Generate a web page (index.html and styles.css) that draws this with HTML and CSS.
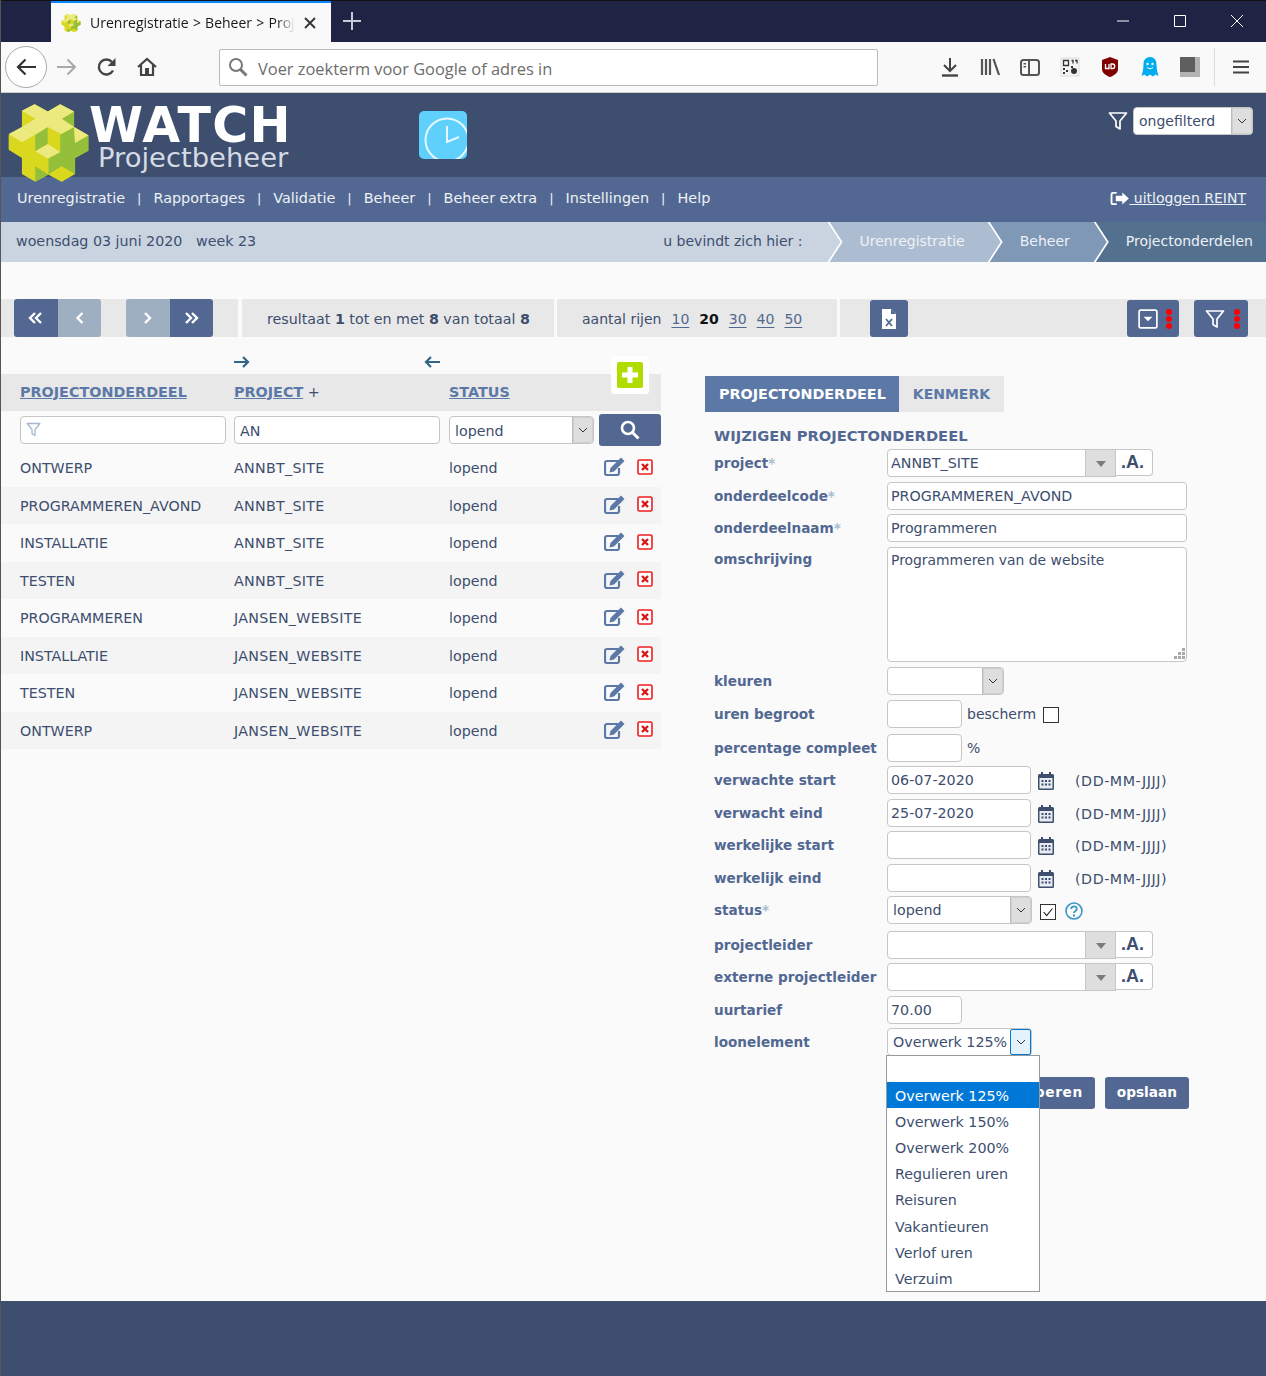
FILE: index.html
```html
<!DOCTYPE html>
<html lang="nl">
<head>
    <meta charset="UTF-8">
    <title>Urenregistratie &gt; Beheer &gt; Projectonderdelen</title>
    <link rel="stylesheet" href="styles.css">
</head>
<body>
<svg class="defs" width="0" height="0">
    <symbol id="logo" viewBox="20 25 250 240">
        <path fill="#d9d81f" d="M65 48 103 28 143 50 180 28 222 50 222 97 265 122 265 168 225 190 225 238 185 262 145 240 105 262 65 238 65 190 25 165 25 120 65 97z"/>
        <path fill="#93bf3a" d="M145 192 180 172 180 120 222 97 225 145 265 122 265 168 225 190 225 238 185 215 145 240z"/>
        <path fill="#93bf3a" d="M185 72 222 50 222 97z"/>
        <path fill="#93bf3a" d="M105 120 143 97 143 148 105 170z"/>
        <path fill="#d9d81f" d="M143 97 180 120 180 172 143 148z"/>
        <path fill="#93bf3a" d="M105 215 145 240 105 262z"/>
        <path fill="#d9d81f" d="M145 240 185 215 185 262z"/>
        <path fill="#ece97f" d="M65 48 103 28 143 50 180 28 222 50 185 72 222 97 183 118 143 97 105 120 65 97 105 72z"/>
        <path fill="#ece97f" d="M25 118 65 97 105 120 65 143z"/>
        <path fill="#ece97f" d="M222 97 265 122 225 145z"/>
        <path fill="#ece97f" d="M105 170 143 148 180 172 143 192z"/>
    </symbol>
    <symbol id="funnel" viewBox="0 0 20 20">
        <path fill="none" stroke="currentColor" stroke-width="1.700" stroke-linejoin="round" d="M1.500 2h17l-6.500 8v8l-4-2.500V10z"/>
    </symbol>
    <symbol id="chev" viewBox="0 0 10 6">
        <path fill="none" stroke="currentColor" stroke-width="1" d="M1 1l4 4 4-4"/>
    </symbol>
    <symbol id="cal" viewBox="0 0 16 18">
        <path fill="#3d4e6e" d="M3 0h2v2h6V0h2v2h1.500A1.500 1.500 0 0 1 16 3.500v13a1.500 1.500 0 0 1-1.500 1.500h-13A1.500 1.500 0 0 1 0 16.500v-13A1.500 1.500 0 0 1 1.500 2H3z"/>
        <path fill="#e8ecf2" d="M1.500 6h13v10.500h-13z"/>
        <path fill="#3d4e6e" d="M3.500 8h2v2h-2zM7 8h2v2H7zM10.500 8h2v2h-2zM3.500 11.500h2v2h-2zM7 11.500h2v2H7zM10.500 11.500h2v2h-2z"/>
    </symbol>
    <symbol id="edit" viewBox="0 0 21 19">
        <path fill="none" stroke="#5b78a6" stroke-width="2.200" d="M14 4H3a2 2 0 0 0-2 2v10a2 2 0 0 0 2 2h10a2 2 0 0 0 2-2v-5"/>
        <path fill="#5b78a6" d="M17 0.500 20.500 4 10 14.500l-4.500 1 1-4.500z"/>
    </symbol>
    <symbol id="del" viewBox="0 0 16 16">
        <rect x="1" y="1" width="14" height="14" rx="1.500" fill="#fff" stroke="#f01c1c" stroke-width="1.600"/>
        <path fill="none" stroke="#d81818" stroke-width="2.400" d="M5 5l6 6M11 5l-6 6"/>
    </symbol>
</svg>

<div class="window">
    <div class="tabbar">
        <div class="tab">
            <svg class="tab-icon"><use href="#logo"/></svg>
            <span class="tab-title">Urenregistratie &gt; Beheer &gt; Proj</span>
            <svg class="tab-close" viewBox="0 0 12 12"><path fill="none" stroke="currentColor" stroke-width="1.800" d="M1 1l10 10M11 1 1 11"/></svg>
        </div>
        <svg class="tab-new" viewBox="0 0 18 18"><path fill="none" stroke="currentColor" stroke-width="2" d="M9 0v18M0 9h18"/></svg>
        <div class="win-buttons">
            <svg viewBox="0 0 12 12"><path stroke="#fff" d="M0 6h12"/></svg>
            <svg viewBox="0 0 12 12"><path fill="none" stroke="#fff" d="M.5.5h11v11H.5z"/></svg>
            <svg viewBox="0 0 12 12"><path stroke="#fff" d="M0 0l12 12M12 0 0 12"/></svg>
        </div>
    </div>

    <div class="toolbar">
        <div class="back-btn">
            <svg viewBox="0 0 20 18"><path fill="none" stroke="#333" stroke-width="2.200" d="M20 9H2M9.500 1.500 2 9l7.500 7.500"/></svg>
        </div>
        <svg class="tool-icon forward" viewBox="0 0 20 18"><path fill="none" stroke="#aaa" stroke-width="2" d="M0 9h18M10.500 1.500 18 9l-7.500 7.500"/></svg>
        <svg class="tool-icon reload" viewBox="0 0 20 20"><path fill="none" stroke="#444" stroke-width="2.400" d="M16 13.500A7.500 7.500 0 1 1 15 5"/><path fill="#444" d="M18.500 1v8h-8z"/></svg>
        <svg class="tool-icon home" viewBox="0 0 20 20"><path fill="none" stroke="#444" stroke-width="2.200" d="M1 10 10 2l9 8M4 8v10h12V8"/><path fill="#444" d="M8 11h4v7H8z"/></svg>
        <div class="urlbar">
            <svg viewBox="0 0 20 20"><circle cx="8" cy="8" r="6" fill="none" stroke="#777" stroke-width="2"/><path stroke="#777" stroke-width="3" d="m12.500 12.500 6 6"/></svg>
            <span>Voer zoekterm voor Google of adres in</span>
        </div>
        <div class="addons">
            <svg viewBox="0 0 20 20"><path fill="none" stroke="#444" stroke-width="2" d="M10 1v13M4 8l6 6 6-6"/><path stroke="#444" stroke-width="2.400" d="M2 18.500h16"/></svg>
            <svg viewBox="0 0 20 20"><path fill="none" stroke="#555" stroke-width="2.200" d="M2 2v16M6 2v16M10 2v16M13.500 2 19 18"/></svg>
            <svg viewBox="0 0 20 20"><rect x="1" y="3" width="18" height="15" rx="2.500" fill="none" stroke="#555" stroke-width="2"/><path fill="#555" d="M8 3h2v15H8zM3.500 6H6v1.500H3.500zM3.500 9H6v1.500H3.500z"/></svg>
            <svg viewBox="0 0 20 20"><rect x="1" y="1" width="18" height="18" fill="#f4f4f4" stroke="#ddd"/><path fill="none" stroke="#333" stroke-width="1.300" d="M3.500 3.500h5v5h-5zM11.500 3.500h1.500v3M15 3.500h2v3"/><path fill="#333" d="M3 11h2v2H3zM6 13h2v2H6zM3 15h2v2H3zM11 9h2v2h-2z"/><circle cx="14" cy="14" r="3" fill="#333"/></svg>
            <svg viewBox="0 0 20 20"><path fill="#800000" d="M10 0 18 3v9c0 4-4 6.500-8 8-4-1.500-8-4-8-8V3z"/><path fill="none" stroke="#fff" stroke-width="1.300" d="M5.500 7v4.500h3.500V7M11 7v4.500h1.500a2.200 2.200 0 0 0 0-4.500z"/></svg>
            <svg viewBox="0 0 20 20"><path fill="#00adef" d="M10 0c4 0 6.500 3 6.500 7 0 5 1 9 2 12l-3-1.500-2.500 2-3-2-3 2-2.500-2-3 1.500c1-3 2-7 2-12C3.500 3 6 0 10 0z"/><circle cx="7.500" cy="7" r="1.200" fill="#fff"/><circle cx="12.500" cy="7" r="1.200" fill="#fff"/><path fill="none" stroke="#fff" d="M7 10.500c1.500 1.500 4.500 1.500 6 0"/></svg>
            <svg viewBox="0 0 20 20"><path fill="#b3b3b3" d="M0 0h20v20H0z"/><path fill="#5f5f5f" d="M0 0h15v15H0z"/></svg>
        </div>
        <svg class="tool-icon menu" viewBox="0 0 16 14"><path stroke="#444" stroke-width="2" d="M0 1.500h16M0 7h16M0 12.500h16"/></svg>
    </div>

    <header class="site-head">
        <svg class="logo"><use href="#logo"/></svg>
        <div class="brand">
            <div class="brand-name">WATCH</div>
            <div class="brand-sub">Projectbeheer</div>
        </div>
        <svg class="clock" viewBox="0 0 48 48">
            <defs><clipPath id="clockclip"><rect width="48" height="48" rx="5"/></clipPath></defs>
            <g clip-path="url(#clockclip)">
                <rect width="48" height="48" fill="#5fd0fb"/>
                <circle cx="28" cy="29" r="21.500" fill="none" stroke="#e6f8ff" stroke-width="2"/>
                <path fill="none" stroke="#e6f8ff" stroke-width="2" d="M28 15v16l12-5"/>
            </g>
        </svg>
        <div class="head-filter">
            <svg class="head-funnel"><use href="#funnel"/></svg>
            <div class="select head-select">
                <span class="select-text">ongefilterd</span>
                <span class="select-btn"><svg><use href="#chev"/></svg></span>
            </div>
        </div>
    </header>

    <nav class="mainnav">
        <a>Urenregistratie</a><i>|</i><a>Rapportages</a><i>|</i><a>Validatie</a><i>|</i><a>Beheer</a><i>|</i><a>Beheer extra</a><i>|</i><a>Instellingen</a><i>|</i><a>Help</a>
        <a class="logout">
            <svg viewBox="0 0 20 16"><path fill="none" stroke="#fff" stroke-width="2" d="M7 2H3a1.500 1.500 0 0 0-1.500 1.500v9A1.500 1.500 0 0 0 3 14h4"/><path fill="#fff" d="M13 1.500 20 8l-7 6.500V11H6V5h7z"/></svg>
            <u>&nbsp;uitloggen REINT</u>
        </a>
    </nav>

    <div class="trail">
        <div class="trail-here">
            <span class="today">woensdag 03 juni 2020 &nbsp; week 23</span>
            <span>u bevindt zich hier :</span>
        </div>
        <div class="crumb crumb-1">Urenregistratie</div>
        <div class="crumb crumb-2">Beheer</div>
        <div class="crumb crumb-3">Projectonderdelen</div>
    </div>

    <div class="pagerbar">
        <div class="pager-cell pager-nav">
            <div class="btn-pair">
                <a class="pg-btn"><svg viewBox="0 0 16 12"><path d="M7 1 2 6l5 5M13 1 8 6l5 5"/></svg></a>
                <a class="pg-btn pg-off"><svg viewBox="0 0 16 12"><path d="M11.500 1 6.500 6l5 5"/></svg></a>
            </div>
            <div class="btn-pair">
                <a class="pg-btn pg-off"><svg viewBox="0 0 16 12"><path d="m5 1 5 5-5 5"/></svg></a>
                <a class="pg-btn"><svg viewBox="0 0 16 12"><path d="m3 1 5 5-5 5M9 1l5 5-5 5"/></svg></a>
            </div>
        </div>
        <div class="pager-cell pager-result"><span>resultaat <b>1</b> tot en met <b>8</b> van totaal <b>8</b></span></div>
        <div class="pager-cell pager-rows">
            <span>aantal rijen</span> <a>10</a> <b>20</b> <a>30</a> <a>40</a> <a>50</a>
        </div>
        <div class="pager-cell pager-tools">
            <a class="tool-btn tool-xls">
                <svg viewBox="0 0 14 20"><path fill="#fff" d="M0 0h9l5 5v15H0z"/><path fill="#526892" d="M9 0v5h5z"/><path fill="none" stroke="#526892" stroke-width="1.800" d="m4 10 6 7M10 10l-6 7"/></svg>
            </a>
            <a class="tool-btn tool-panel">
                <svg viewBox="0 0 18 18"><rect x="1" y="1" width="16" height="16" rx="1.500" fill="none" stroke="#fff" stroke-width="1.500"/><path fill="#fff" d="M5 7h8l-4 4z"/></svg>
                <span class="dots"><i></i><i></i><i></i></span>
            </a>
            <a class="tool-btn tool-filter">
                <svg><use href="#funnel"/></svg>
                <span class="dots"><i></i><i></i><i></i></span>
            </a>
        </div>
    </div>

    <main class="content">
        <section class="listing">
            <div class="move-row">
                <svg viewBox="0 0 16 12"><path d="M0 6h14M9 1l5 5-5 5"/></svg>
                <svg viewBox="0 0 16 12"><path d="M16 6H2M7 1 2 6l5 5"/></svg>
            </div>
            <a class="add-btn"><svg viewBox="0 0 26 26"><rect width="26" height="26" rx="2" fill="#b1dc00"/><path fill="#fff" d="M10.500 5h5v5.500H21v5h-5.500V21h-5v-5.500H5v-5h5.500z"/></svg></a>
            <div class="list-head list-grid">
                <span><a>PROJECTONDERDEEL</a></span>
                <span><a>PROJECT</a> +</span>
                <span><a>STATUS</a></span>
            </div>
            <div class="list-filter list-grid">
                <div class="filter-input">
                    <svg><use href="#funnel"/></svg>
                    <input class="field" type="text">
                </div>
                <input class="field" type="text" value="AN">
                <div class="select">
                    <span class="select-text">lopend</span>
                    <span class="select-btn"><svg><use href="#chev"/></svg></span>
                </div>
                <a class="search-btn"><svg viewBox="0 0 20 20"><circle cx="8" cy="8" r="6" fill="none" stroke="#fff" stroke-width="2.600"/><path stroke="#fff" stroke-width="3" d="m12.500 12.500 6 6"/></svg></a>
            </div>
            <div class="list-row list-grid"><span>ONTWERP</span><span>ANNBT_SITE</span><span>lopend</span><span class="row-actions"><svg class="ic-edit"><use href="#edit"/></svg><svg class="ic-del"><use href="#del"/></svg></span></div>
            <div class="list-row list-grid"><span>PROGRAMMEREN_AVOND</span><span>ANNBT_SITE</span><span>lopend</span><span class="row-actions"><svg class="ic-edit"><use href="#edit"/></svg><svg class="ic-del"><use href="#del"/></svg></span></div>
            <div class="list-row list-grid"><span>INSTALLATIE</span><span>ANNBT_SITE</span><span>lopend</span><span class="row-actions"><svg class="ic-edit"><use href="#edit"/></svg><svg class="ic-del"><use href="#del"/></svg></span></div>
            <div class="list-row list-grid"><span>TESTEN</span><span>ANNBT_SITE</span><span>lopend</span><span class="row-actions"><svg class="ic-edit"><use href="#edit"/></svg><svg class="ic-del"><use href="#del"/></svg></span></div>
            <div class="list-row list-grid"><span>PROGRAMMEREN</span><span>JANSEN_WEBSITE</span><span>lopend</span><span class="row-actions"><svg class="ic-edit"><use href="#edit"/></svg><svg class="ic-del"><use href="#del"/></svg></span></div>
            <div class="list-row list-grid"><span>INSTALLATIE</span><span>JANSEN_WEBSITE</span><span>lopend</span><span class="row-actions"><svg class="ic-edit"><use href="#edit"/></svg><svg class="ic-del"><use href="#del"/></svg></span></div>
            <div class="list-row list-grid"><span>TESTEN</span><span>JANSEN_WEBSITE</span><span>lopend</span><span class="row-actions"><svg class="ic-edit"><use href="#edit"/></svg><svg class="ic-del"><use href="#del"/></svg></span></div>
            <div class="list-row list-grid"><span>ONTWERP</span><span>JANSEN_WEBSITE</span><span>lopend</span><span class="row-actions"><svg class="ic-edit"><use href="#edit"/></svg><svg class="ic-del"><use href="#del"/></svg></span></div>
        </section>

        <section class="detail">
            <div class="tabs">
                <a class="tabs-item tabs-active">PROJECTONDERDEEL</a>
                <a class="tabs-item">KENMERK</a>
            </div>
            <h2 class="form-title">WIJZIGEN PROJECTONDERDEEL</h2>

            <div class="form-row">
                <label>project<em>*</em></label>
                <div class="combo">
                    <input class="field" type="text" value="ANNBT_SITE">
                    <span class="combo-btn"></span>
                    <span class="combo-a">.A.</span>
                </div>
            </div>
            <div class="form-row">
                <label>onderdeelcode<em>*</em></label>
                <input class="field w-full" type="text" value="PROGRAMMEREN_AVOND">
            </div>
            <div class="form-row">
                <label>onderdeelnaam<em>*</em></label>
                <input class="field w-full" type="text" value="Programmeren">
            </div>
            <div class="form-row form-row-area">
                <label>omschrijving</label>
                <div class="area-wrap">
                    <textarea class="field w-full area">Programmeren van de website</textarea>
                    <svg class="area-grip" viewBox="0 0 12 12"><path fill="#aaa" d="M9 0h3v3H9zM5 4h3v3H5zM9 4h3v3H9zM1 8h3v3H1zM5 8h3v3H5zM9 8h3v3H9z"/></svg>
                </div>
            </div>
            <div class="form-row form-row-color">
                <label>kleuren</label>
                <div class="select w-color"><span class="select-text"></span><span class="select-btn"><svg><use href="#chev"/></svg></span></div>
            </div>
            <div class="form-row form-row-tall">
                <label>uren begroot</label>
                <input class="field w-short" type="text">
                <span class="after-field">bescherm</span>
                <span class="check"></span>
            </div>
            <div class="form-row">
                <label>percentage compleet</label>
                <input class="field w-short" type="text">
                <span class="after-field">%</span>
            </div>
            <div class="form-row">
                <label>verwachte start</label>
                <input class="field w-date" type="text" value="06-07-2020">
                <svg class="ic-cal"><use href="#cal"/></svg>
                <span class="date-hint">(DD-MM-JJJJ)</span>
            </div>
            <div class="form-row">
                <label>verwacht eind</label>
                <input class="field w-date" type="text" value="25-07-2020">
                <svg class="ic-cal"><use href="#cal"/></svg>
                <span class="date-hint">(DD-MM-JJJJ)</span>
            </div>
            <div class="form-row">
                <label>werkelijke start</label>
                <input class="field w-date" type="text">
                <svg class="ic-cal"><use href="#cal"/></svg>
                <span class="date-hint">(DD-MM-JJJJ)</span>
            </div>
            <div class="form-row">
                <label>werkelijk eind</label>
                <input class="field w-date" type="text">
                <svg class="ic-cal"><use href="#cal"/></svg>
                <span class="date-hint">(DD-MM-JJJJ)</span>
            </div>
            <div class="form-row form-row-tall2">
                <label>status<em>*</em></label>
                <div class="select w-select"><span class="select-text">lopend</span><span class="select-btn"><svg><use href="#chev"/></svg></span></div>
                <span class="check check-on"><svg viewBox="0 0 16 16"><path fill="none" stroke="#222" stroke-width="1.300" d="m3 8 3.500 4L13 4"/></svg></span>
                <svg class="ic-help" viewBox="0 0 18 18"><circle cx="9" cy="9" r="8" fill="none" stroke="#3d96c6" stroke-width="1.600"/><path fill="none" stroke="#3d96c6" stroke-width="1.800" d="M6.200 7c0-3.500 5.600-3.500 5.600 0 0 2-2.800 2-2.800 4"/><path fill="#3d96c6" d="M8 12.500h2v2H8z"/></svg>
            </div>
            <div class="form-row">
                <label>projectleider</label>
                <div class="combo">
                    <input class="field" type="text">
                    <span class="combo-btn"></span>
                    <span class="combo-a">.A.</span>
                </div>
            </div>
            <div class="form-row">
                <label>externe projectleider</label>
                <div class="combo">
                    <input class="field" type="text">
                    <span class="combo-btn"></span>
                    <span class="combo-a">.A.</span>
                </div>
            </div>
            <div class="form-row">
                <label>uurtarief</label>
                <input class="field w-short" type="text" value="70.00">
            </div>
            <div class="form-row form-row-open">
                <label>loonelement</label>
                <div class="select w-select select-open">
                    <span class="select-text">Overwerk 125%</span>
                    <span class="select-btn"><svg><use href="#chev"/></svg></span>
                    <ul class="select-menu">
                        <li></li>
                        <li class="is-selected">Overwerk 125%</li>
                        <li>Overwerk 150%</li>
                        <li>Overwerk 200%</li>
                        <li>Regulieren uren</li>
                        <li>Reisuren</li>
                        <li>Vakantieuren</li>
                        <li>Verlof uren</li>
                        <li>Verzuim</li>
                    </ul>
                </div>
            </div>
            <div class="form-actions">
                <a class="act-btn act-copy">groeperen</a>
                <a class="act-btn">opslaan</a>
            </div>
        </section>
    </main>

    <footer class="site-foot"></footer>
</div>
</body>
</html>
```

FILE: styles.css
```css
* {
    box-sizing: border-box;
}
body {
    margin: 0;
    font-family: "DejaVu Sans", Verdana, sans-serif;
    font-size: 14.25px;
    color: #3d4e6e;
    background: #fafafa;
}
.defs {
    position: absolute;
}
.window {
    display: flex;
    flex-direction: column;
    height: 1376px;
    border-left: 1px solid #555;
    overflow: hidden;
}

/* browser chrome */
.tabbar {
    display: flex;
    align-items: flex-start;
    height: 42px;
    flex: none;
    background: #1f2344;
    border-top: 1px solid #111;
    padding-left: 50px;
}
.tab {
    display: flex;
    align-items: center;
    width: 280px;
    height: 41px;
    padding: 0 15px 0 10px;
    background: #f9f9fa;
    border-top: 2px solid #0a84ff;
    font-family: "Open Sans", sans-serif;
    font-size: 14px;
    word-spacing: .6px;
    color: #18191a;
}
.tab-icon {
    width: 20px;
    height: 20px;
    flex: none;
}
.tab-title {
    flex: 1;
    margin: 0 9px;
    white-space: nowrap;
    overflow: hidden;
    -webkit-mask-image: linear-gradient(to left, transparent 0, #000 18px);
    mask-image: linear-gradient(to left, transparent 0, #000 18px);
}
.tab-close {
    width: 12px;
    height: 12px;
    flex: none;
    color: #333;
}
.tab-new {
    width: 18px;
    height: 18px;
    margin: 11px 0 0 12px;
    color: #c8c9d2;
}
.win-buttons {
    display: flex;
    gap: 45px;
    margin: 14px 23px 0 auto;
}
.win-buttons svg {
    width: 12px;
    height: 12px;
}
.toolbar {
    display: flex;
    align-items: center;
    height: 51px;
    flex: none;
    background: #f9f9fa;
    border-bottom: 1px solid #ccc;
    padding-left: 4px;
}
.back-btn {
    display: flex;
    align-items: center;
    justify-content: center;
    width: 42px;
    height: 42px;
    background: #fff;
    border: 1px solid #aaa;
    border-radius: 50%;
}
.back-btn svg {
    width: 20px;
    height: 18px;
}
.tool-icon {
    flex: none;
    width: 20px;
    height: 20px;
}
.forward {
    margin-left: 10px;
}
.reload {
    margin-left: 20px;
}
.home {
    margin-left: 20px;
}
.urlbar {
    display: flex;
    align-items: center;
    gap: 10px;
    width: 659px;
    height: 37px;
    margin-left: 62px;
    padding-left: 8px;
    background: #fff;
    border: 1px solid #bbb;
    border-radius: 2px;
    font-family: "Open Sans", sans-serif;
    font-size: 16.4px;
    color: #6d6d6d;
}
.urlbar span {
    padding-top: 2px;
}
.urlbar svg {
    width: 20px;
    height: 20px;
}
.addons {
    display: flex;
    gap: 20px;
    margin-left: 62px;
    padding-right: 14px;
    height: 38px;
    align-items: center;
    border-right: 1px solid #ddd;
}
.addons svg {
    width: 20px;
    height: 20px;
}
.menu {
    width: 16px;
    height: 14px;
    margin-left: 18px;
}

/* site header */
.site-head {
    display: flex;
    flex: none;
    height: 84px;
    background: #3d4e6e;
    position: relative;
}
.logo {
    flex: none;
    width: 83px;
    height: 80px;
    margin: 10px 0 0 6px;
    z-index: 1;
}
.brand {
    flex: none;
    width: 200px;
    margin-left: -1px;
    color: #fff;
}
.brand-name {
    font-weight: bold;
    font-size: 49px;
    line-height: 34px;
    margin-top: 16px;
    letter-spacing: 1.3px;
    white-space: nowrap;
}
.brand-sub {
    margin: 1px 0 0 9px;
    font-size: 27.4px;
    line-height: 28px;
    color: #d5dbe5;
}
.clock {
    flex: none;
    width: 48px;
    height: 48px;
    margin: 18px 0 0 130px;
}
.head-filter {
    display: flex;
    align-items: flex-start;
    gap: 5px;
    margin: 14px 13px 0 auto;
    font-size: 14px;
}
.head-funnel {
    width: 20px;
    height: 20px;
    margin-top: 4px;
    color: #fff;
}
.head-select {
    width: 120px;
}
.mainnav {
    display: flex;
    align-items: center;
    flex: none;
    height: 45px;
    padding: 0 20px 3px 16px;
    background: #526892;
    color: #eef1f6;
    font-size: 14.4px;
}
.mainnav i {
    font-style: normal;
    margin: 0 12px;
    font-size: 13px;
}
.logout {
    display: flex;
    align-items: center;
    margin-left: auto;
    font-size: 14px;
}
.logout svg {
    width: 19px;
    height: 15px;
}
.trail {
    display: flex;
    flex: none;
    height: 40px;
    background: #fff;
    font-size: 14px;
}
.trail-here {
    display: flex;
    flex: 1;
    align-items: center;
    justify-content: space-between;
    margin-right: -11px;
    padding: 0 38px 3px 15px;
    background: #cad4e1;
    clip-path: polygon(0 0, calc(100% - 13px) 0, 100% 50%, calc(100% - 13px) 100%, 0 100%);
}
.today {
    font-size: 14.25px;
    white-space: pre;
}
.crumb {
    display: flex;
    align-items: center;
    margin-right: -11px;
    padding: 0 36px 3px 30px;
    color: #eef1f6;
    clip-path: polygon(0 0, calc(100% - 13px) 0, 100% 50%, calc(100% - 13px) 100%, 0 100%, 13px 50%);
}
.crumb-1 {
    background: #adbdd1;
}
.crumb-2 {
    padding-right: 37px;
    background: #7f98b6;
}
.crumb-3 {
    background: #54708f;
    margin-right: 0;
    padding-right: 13px;
    clip-path: polygon(0 0, 100% 0, 100% 100%, 0 100%, 13px 50%);
}

/* pager */
.pagerbar {
    display: flex;
    flex: none;
    gap: 3px;
    height: 38px;
    margin-top: 37px;
}
.pager-cell {
    display: flex;
    align-items: center;
    padding-top: 1px;
    background: #e8e8e8;
}
.pager-nav {
    gap: 25px;
    width: 237px;
    padding: 0 0 0 13px;
}
.btn-pair {
    display: flex;
    height: 100%;
}
.pg-btn {
    display: flex;
    align-items: center;
    justify-content: center;
    width: 43.5px;
    background: #526892;
}
.pg-btn:first-child {
    border-radius: 3px 0 0 3px;
}
.pg-btn:last-child {
    border-radius: 0 3px 3px 0;
}
.pg-off {
    background: #9eafc2;
}
.pg-btn svg {
    width: 16px;
    height: 12px;
    fill: none;
    stroke: #fff;
    stroke-width: 2.400;
}
.pager-result {
    width: 312px;
    padding-left: 25px;
    margin-left: 1px;
}
.pager-result b {
    color: #3d4e6e;
}
.pager-rows {
    gap: 10px;
    width: 280px;
    padding-left: 25px;
    font-size: 14px;
}
.pager-rows a {
    text-decoration: underline;
    text-underline-offset: 3px;
    color: #526892;
}
.pager-rows b {
    color: #111;
}
.pager-tools {
    flex: 1;
    padding: 0 0 0 30px;
}
.tool-btn {
    display: flex;
    align-items: center;
    height: 37px;
    margin-top: 1px;
    background: #526892;
    border-radius: 3px;
}
.tool-xls {
    justify-content: center;
    width: 38px;
}
.tool-xls svg {
    width: 14px;
    height: 20px;
}
.tool-panel {
    width: 52px;
    gap: 8px;
    margin-left: 219px;
    padding-left: 11px;
}
.tool-panel svg {
    width: 20px;
    height: 20px;
}
.tool-filter {
    width: 54px;
    gap: 9px;
    margin-left: 15px;
    padding-left: 11px;
    color: #fff;
}
.tool-filter svg {
    width: 20px;
    height: 20px;
}
.dots {
    display: flex;
    flex-direction: column;
    gap: 1px;
}
.dots i {
    width: 6px;
    height: 6px;
    background: #f00;
    border-radius: 50%;
}

/* list */
.content {
    display: flex;
    flex: 1;
}
.listing {
    position: relative;
    width: 660px;
    flex: none;
}
.move-row {
    display: flex;
    align-items: flex-end;
    height: 37px;
    padding: 0 0 6px 233px;
    gap: 174px;
}
.move-row svg {
    width: 16px;
    height: 12px;
    fill: none;
    stroke: #32658a;
    stroke-width: 2.200;
}
.add-btn {
    position: absolute;
    top: 19px;
    left: 610px;
    width: 38px;
    height: 38px;
    padding: 6px;
    background: #fff;
    border-radius: 3px;
}
.add-btn svg {
    display: block;
    width: 26px;
    height: 26px;
}
.list-grid {
    display: grid;
    grid-template-columns: 206px 206px 146px 62px;
    column-gap: 8px;
    padding-left: 19px;
    align-items: center;
}
.list-grid > :nth-child(3) {
    margin-left: 1px;
}
.list-head {
    height: 37px;
    background: #e8e8e8;
    font-size: 14.35px;
}
.list-head span {
    white-space: nowrap;
    padding-bottom: 1px;
}
.list-head a {
    font-weight: bold;
    color: #5b78a6;
    text-decoration: underline;
}
.list-filter {
    height: 38px;
}
.list-filter .field {
    padding-top: 2px;
}
.list-filter .select-text {
    padding-top: 1px;
}
.list-filter .search-btn {
    margin-left: -3px;
    width: 62px;
}
.filter-input {
    position: relative;
}
.filter-input svg {
    position: absolute;
    left: 6px;
    top: 6px;
    width: 15px;
    height: 15px;
    color: #a7b8cc;
}
.filter-input .field {
    width: 100%;
}
.search-btn {
    display: flex;
    align-items: center;
    justify-content: center;
    height: 32px;
    background: #526892;
    border-radius: 3px;
}
.search-btn svg {
    width: 20px;
    height: 20px;
}
.list-row {
    height: 37.5px;
    padding-top: 1px;
}
.list-row:nth-of-type(odd) {
    background: #f4f4f4;
}
.list-row > :nth-child(2) {
    letter-spacing: .3px;
}
.row-actions {
    display: flex;
    align-items: center;
    gap: 12px;
    margin: -3px 0 0 2px;
}
.ic-edit {
    width: 21px;
    height: 19px;
}
.ic-del {
    width: 16px;
    height: 16px;
}

/* form controls */
.field {
    height: 28px;
    padding: 0 3px;
    background: #fff;
    border: 1px solid #c6c6c6;
    border-radius: 4px;
    font: 14.25px "DejaVu Sans", Verdana, sans-serif;
    color: #3d4e6e;
    outline: 0;
}
.list-filter .field {
    padding-left: 5px;
}
.w-full {
    width: 300px;
}
.w-short {
    width: 75px;
}
.w-date {
    width: 144px;
}
.w-select {
    width: 145px;
}
.w-color {
    width: 117px;
}
.select {
    display: flex;
    position: relative;
    height: 28px;
    background: #fff;
    border: 1px solid #c6c6c6;
    border-radius: 4px;
    color: #3d4e6e;
}
.select-text {
    flex: 1;
    align-self: center;
    padding-left: 5px;
    white-space: nowrap;
}
.select-btn {
    display: flex;
    align-items: center;
    justify-content: center;
    width: 21px;
    background: #dedede;
    border-left: 1px solid #bbb;
    border-radius: 0 3px 3px 0;
    box-shadow: inset 0 0 0 1px #cfcfcf;
    color: #333;
}
.select-btn svg {
    width: 10px;
    height: 6px;
}

/* detail form */
.detail {
    margin-left: 44px;
    padding-top: 39px;
    flex: 1;
}
.tabs {
    display: flex;
    height: 36px;
    font-weight: bold;
    font-size: 14px;
}
.tabs-item {
    display: flex;
    align-items: center;
    padding: 0 14px 0 14px;
    background: #e8e8e8;
    color: #5b78a6;
}
.tabs-item.tabs-active {
    padding-right: 13px;
    background: #5b78a6;
    font-size: 14.35px;
    color: #fff;
}
.form-title {
    height: 37px;
    margin: 0 0 0 9px;
    padding-top: 16px;
    font-size: 14.7px;
    line-height: 16px;
    color: #526892;
}
.form-row {
    display: flex;
    align-items: flex-start;
    height: 32.5px;
    padding-left: 9px;
}
.form-row-area {
    height: 120px;
}
.form-row-color {
    height: 33px;
}
.form-row-tall {
    height: 34px;
}
.form-row-tall2 {
    height: 34.5px;
}
.form-row label {
    flex: none;
    width: 173px;
    padding-top: 5px;
    font-weight: bold;
    font-size: 13.6px;
    line-height: 18px;
    white-space: nowrap;
    color: #526892;
}
.form-row-area label {
    padding-top: 3px;
}
.form-row em {
    font-style: normal;
    color: #a7bcd0;
}
.area-wrap {
    position: relative;
    height: 115px;
}
.area {
    display: block;
    height: 115px;
    padding-top: 3px;
    font-size: 13.9px;
    line-height: 18px;
    resize: none;
}
.area-grip {
    position: absolute;
    right: 2px;
    bottom: 2px;
    width: 12px;
    height: 12px;
}
.combo {
    display: flex;
    align-items: flex-start;
}
.combo .field {
    width: 199px;
    border-radius: 4px 0 0 4px;
}
.combo-btn {
    position: relative;
    width: 30px;
    height: 28px;
    background: #dedede;
    border: 1px solid #c6c6c6;
    border-left: 0;
}
.combo-btn::after {
    content: "";
    position: absolute;
    left: 10px;
    top: 11px;
    border: 5px solid transparent;
    border-top: 6px solid #7b7b7b;
    border-bottom: 0;
}
.combo-a {
    width: 37px;
    height: 27px;
    padding: 2px 3px 0 0;
    background: #fff;
    border: 1px solid #c6c6c6;
    border-left: 0;
    border-radius: 0 4px 4px 0;
    text-align: center;
    font-family: "Liberation Sans", sans-serif;
    font-weight: bold;
    font-size: 18px;
    line-height: 20px;
    color: #3d4e6e;
}
.after-field {
    margin-left: 5px;
    font-size: 14px;
    line-height: 29px;
}
.check {
    display: inline-block;
    width: 16px;
    height: 16px;
    margin: 7px 0 0 7px;
    background: #fff;
    border: 1px solid #333;
}
.check svg {
    display: block;
    width: 14px;
    height: 14px;
}
.check-on {
    margin: 8px 0 0 8px;
}
.ic-cal {
    width: 16px;
    height: 18px;
    margin: 6px 0 0 7px;
}
.date-hint {
    margin-left: 21px;
    line-height: 30px;
    letter-spacing: .55px;
}
.ic-help {
    width: 18px;
    height: 18px;
    margin: 6px 0 0 9px;
}
.select-open .select-btn {
    background: #e5f1fb;
    border: 1px solid #0078d7;
    box-shadow: none;
    border-radius: 2px;
}
.select-menu {
    position: absolute;
    top: 26px;
    left: -2px;
    width: 154px;
    margin: 0;
    padding: 0;
    list-style: none;
    background: #fff;
    border: 1px solid #999;
    z-index: 2;
}
.select-menu li {
    height: 26.1px;
    padding: 0 8px;
    line-height: 28px;
    white-space: nowrap;
}
.select-menu .is-selected {
    background: #0078d7;
    color: #fff;
}
.form-actions {
    display: flex;
    justify-content: flex-end;
    gap: 10px;
    width: 484px;
    margin-top: 16px;
}
.act-btn {
    height: 32px;
    padding: 0 12px;
    background: #526892;
    border-radius: 3px;
    font-weight: bold;
    font-size: 13.7px;
    line-height: 30px;
    color: #fff;
}
.act-copy {
    letter-spacing: .6px;
}
.site-foot {
    flex: none;
    height: 75px;
    background: #3d4e6e;
}
```
